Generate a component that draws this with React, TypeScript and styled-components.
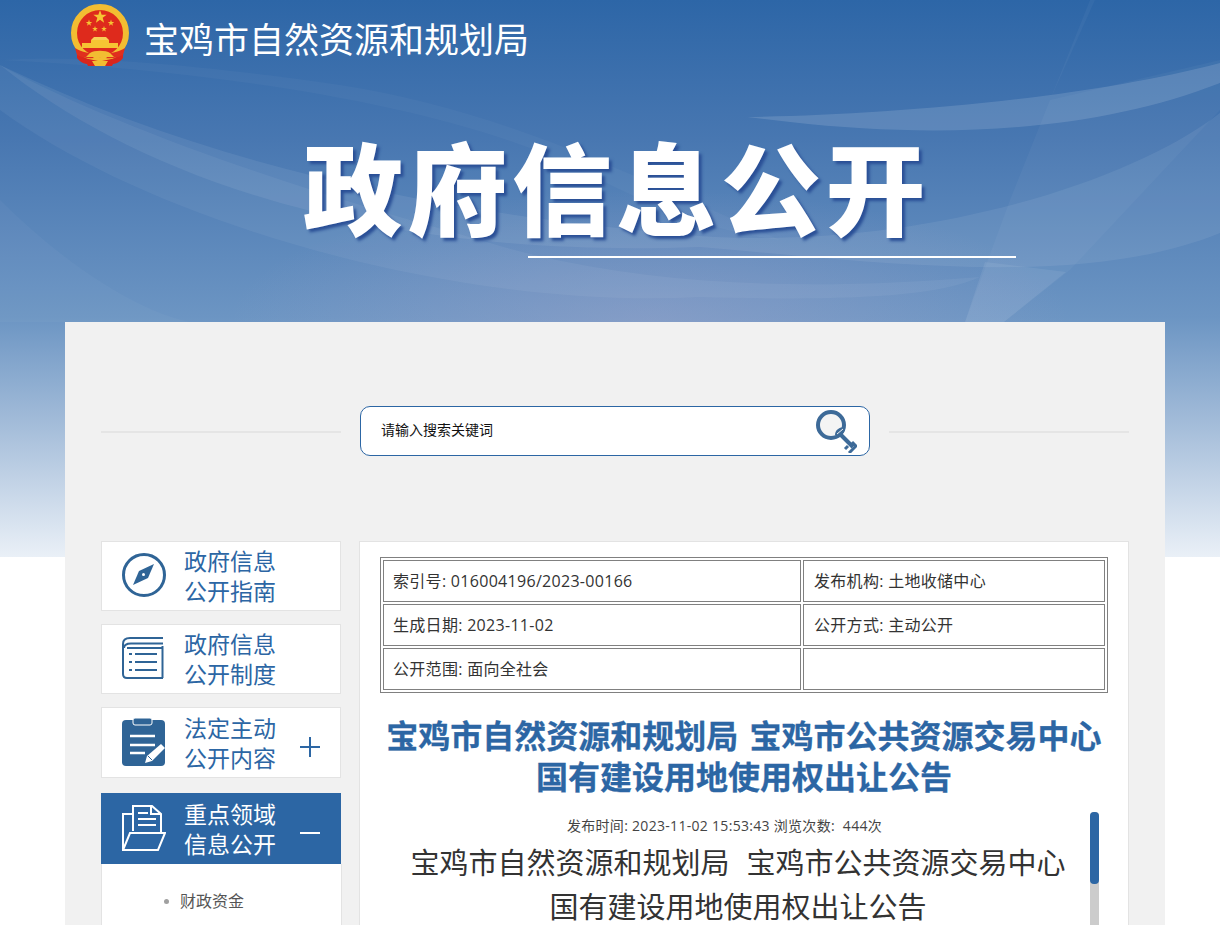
import { FC, ReactNode } from "react";
import styled, { createGlobalStyle } from "styled-components";

const BLUE = "#2c66a4";

const GlobalStyle = createGlobalStyle`
	html, body {
		margin: 0;
		padding: 0;
	}
	body {
		background: #fff;
		font-family: "Noto Sans CJK SC", "Liberation Sans", sans-serif;
	}
`;

const Page = styled.div`
	position: relative;
	height: 925px;
	overflow: hidden;
	background: linear-gradient(
			180deg,
			#2d66a7 0%,
			#4877b1 25%,
			#6c95c3 57%,
			#a3bcd9 76%,
			#eaf0f7 100%
		)
		top / 100% 557px no-repeat #fff;
`;

const Waves = styled.svg`
	position: absolute;
	top: 0;
	left: 0;
`;

const Hero = styled.header`
	position: relative;
	height: 322px;
`;

const Brand = styled.div`
	display: flex;
	align-items: flex-start;
	gap: 14px;
	padding: 4px 0 0 70px;
	height: 68px;
`;

const BrandName = styled.div`
	margin-top: 8px;
	font-size: 35px;
	line-height: 52px;
	color: #fff;
	white-space: nowrap;
`;

const HeroTitle = styled.h1`
	margin: 53px 0 0 303px;
	font-size: 100px;
	line-height: 120px;
	font-weight: 900;
	letter-spacing: 4.5px;
	color: #fff;
	white-space: nowrap;
	text-shadow: 3px 3px 3px #2a4f96;
`;

const HeroRule = styled.div`
	margin: 11px 0 0 528px;
	width: 488px;
	height: 2px;
	background: #fff;
`;

const Panel = styled.main`
	position: relative;
	margin: 0 55px 0 65px;
	padding: 84px 36px 0;
	height: 603px;
	box-sizing: border-box;
	background: #f1f1f1;
`;

const SearchRow = styled.div`
	display: flex;
	align-items: center;
	gap: 19px;
`;

const SearchLine = styled.div`
	flex: 1;
	height: 2px;
	margin-top: 2px;
	background: #e5e5e5;
`;

const SearchBox = styled.div`
	display: flex;
	align-items: center;
	justify-content: space-between;
	box-sizing: border-box;
	width: 510px;
	height: 50px;
	padding: 0 12px 0 20px;
	border: 1px solid ${BLUE};
	border-radius: 10px;
	background: #fff;
`;

const SearchHint = styled.span`
	margin-bottom: 4px;
	font-size: 14px;
	color: #111;
`;

const Columns = styled.div`
	display: flex;
	align-items: flex-start;
	gap: 18px;
	margin-top: 85px;
`;

const Sidebar = styled.nav`
	flex: none;
	width: 240px;
`;

const NavItem = styled.div<{ $active?: boolean; $tall?: boolean }>`
	display: flex;
	align-items: center;
	box-sizing: border-box;
	height: ${(p) => (p.$tall ? 71 : 70)}px;
	margin-bottom: ${(p) => (p.$active ? 0 : p.$tall ? 15 : 13)}px;
	padding: 0 0 2px 20px;
	border: 1px solid ${(p) => (p.$active ? BLUE : "#e3e3e3")};
	background: ${(p) => (p.$active ? BLUE : "#fff")};
	color: ${(p) => (p.$active ? "#fff" : BLUE)};
`;

const NavIcon = styled.div`
	flex: none;
	width: 44px;
	display: flex;
	align-items: center;
	justify-content: flex-start;
	margin-right: 18px;
`;

const NavLabel = styled.div`
	width: 95px;
	font-size: 23px;
	line-height: 30px;
	white-space: nowrap;
`;

const Toggle = styled.svg`
	flex: none;
	margin: 10px 0 0 21px;
`;

const SubMenu = styled.ul`
	box-sizing: border-box;
	width: 241px;
	height: 200px;
	margin: 0;
	padding: 24px 0 0 78px;
	border: 1px solid #e3e3e3;
	border-top: none;
	background: #fff;
	list-style: none;
`;

const SubItem = styled.li`
	position: relative;
	font-size: 16px;
	line-height: 24px;
	color: #555;
	&::before {
		content: "";
		position: absolute;
		left: -16px;
		top: 11px;
		width: 5px;
		height: 5px;
		border-radius: 50%;
		background: #a0a0a0;
	}
`;

const Article = styled.article`
	position: relative;
	flex: none;
	box-sizing: border-box;
	width: 770px;
	height: 400px;
	padding: 15px 20px 0;
	border: 1px solid #e3e3e3;
	background: #fff;
`;

const MetaTable = styled.table`
	width: 728px;
	table-layout: fixed;
	border: 1px solid #808080;
	border-spacing: 2px;
`;

const MetaCell = styled.td<{ $wide?: boolean }>`
	box-sizing: border-box;
	width: ${(p) => (p.$wide ? 418 : 302)}px;
	height: 42px;
	padding: 0 0 2px ${(p) => (p.$wide ? 9 : 10)}px;
	border: 1px solid #808080;
	font-family: "Open Sans", "Noto Sans CJK SC", sans-serif;
	font-size: 16px;
	letter-spacing: 0.3px;
	color: #333;
`;

const Headline = styled.h2`
	margin: 21px 0 0;
	font-size: 32px;
	line-height: 41px;
	font-weight: 700;
	word-spacing: 4px;
	-webkit-text-stroke: 0.3px ${BLUE};
	color: ${BLUE};
	text-align: center;
`;

const Published = styled.div`
	margin: 20px 0 0 -39px;
	font-family: "Open Sans", "Noto Sans CJK SC", sans-serif;
	font-size: 14px;
	line-height: 20px;
	letter-spacing: 0.3px;
	color: #444;
	text-align: center;
`;

const BodyTitle = styled.p`
	margin: 3px 0 0 -12px;
	font-size: 29px;
	line-height: 44px;
	word-spacing: 2px;
	color: #333;
	text-align: center;
	white-space: pre-wrap;
`;

const ScrollTrack = styled.div`
	position: absolute;
	top: 270px;
	left: 730px;
	width: 9px;
	height: 130px;
	border-radius: 4px;
	background: #ccc;
`;

const ScrollThumb = styled.div`
	height: 72px;
	border-radius: 4px;
	background: ${BLUE};
`;

const star = (cx: number, cy: number, r: number) => {
	const points: string[] = [];
	for (let i = 0; i < 10; i++) {
		const radius = i % 2 === 0 ? r : r * 0.4;
		const angle = (Math.PI / 5) * i - Math.PI / 2;
		points.push(`${cx + radius * Math.cos(angle)},${cy + radius * Math.sin(angle)}`);
	}
	return points.join(" ");
};

const Emblem = () => (
	<svg width="60" height="64" viewBox="0 0 60 64">
		<path d="M7 47 C12 50 17 52 22 52 L22 60 C15 61 10 58 7 54 Z" fill="#d9261c" />
		<path d="M53 47 C48 50 43 52 38 52 L38 60 C45 61 50 58 53 54 Z" fill="#d9261c" />
		<circle cx="30" cy="29" r="26" fill="#de2a1c" stroke="#f2bd32" strokeWidth="6" />
		<polygon points={star(30, 13, 7)} fill="#f6c433" />
		<polygon points={star(19, 19, 3.4)} fill="#f6c433" />
		<polygon points={star(41, 19, 3.4)} fill="#f6c433" />
		<polygon points={star(25, 25, 3)} fill="#f6c433" />
		<polygon points={star(34, 25, 3)} fill="#f6c433" />
		<path d="M24 33 H36 L39 36 H21 Z" fill="#f8cf56" />
		<rect x="21" y="36" width="18" height="3" fill="#f6c433" />
		<rect x="12" y="39" width="36" height="5" fill="#f6c433" />
		<path d="M5 44 C12 48 20 50 30 50 C40 50 48 48 55 44 L53 51 C45 55 38 55 30 53 C22 55 15 55 7 51 Z" fill="#e02f1e" />
		<path d="M20 49 C24 46 36 46 40 49 L44 53 L37 53 L34 57 L30 53 L26 57 L23 53 L16 53 Z" fill="#f2bd32" />
		<path d="M14 54 L28 57 L27 62 H18 Z" fill="#d9261c" />
		<path d="M46 54 L32 57 L33 62 H42 Z" fill="#d9261c" />
		<path d="M22 57 H38 L35 62 H25 Z" fill="#f2bd32" />
	</svg>
);

const KeyIcon = () => (
	<svg width="42" height="44" viewBox="0 0 42 44">
		<circle cx="16" cy="16" r="13" fill="#f4f4f4" stroke="#3d6a98" strokeWidth="4" />
		<path d="M24 24 L38 38" stroke="#3d6a98" strokeWidth="4" />
		<path d="M33 37 L30 40 M37 41 L34 44 M37 33 L41 37 L37 41" stroke="#3d6a98" strokeWidth="3" fill="none" />
		<path d="M20 26 C20 21 24 18 30 18 C30 24 26 27 20 26 Z" fill="#3d6a98" />
		<path d="M22 25 L28 20" stroke="#f4f4f4" strokeWidth="1" />
	</svg>
);

const CompassIcon = () => (
	<svg width="44" height="50" viewBox="0 -3 44 50">
		<circle cx="22" cy="22" r="20.5" fill="none" stroke="#2f6496" strokeWidth="3" />
		<path d="M32 11 L17 18 L11 32 L26 25 Z" fill="#2f6496" />
		<circle cx="21.5" cy="21.5" r="1.5" fill="#fff" />
	</svg>
);

const BookIcon = () => (
	<svg width="42" height="46" viewBox="0 -2 42 46" fill="none" stroke="#2f6496" strokeWidth="2">
		<path d="M41 1 H8 C3 1 1 3 1 7 V37 C1 40 2 41 5 41 H41" />
		<path d="M41 6.5 H9 C4 6.5 2 8 2 11" />
		<path d="M40.500 9 V41" />
		<path d="M5 11 H40" />
		<path d="M13 17 H35 M13 25 H35 M13 33 H35" />
		<path d="M7 17 H10 M7 25 H10 M7 33 H10" />
	</svg>
);

const ClipboardIcon = () => (
	<svg width="43" height="48" viewBox="0 0 43 48">
		<rect x="0" y="2" width="43" height="46" rx="4" fill="#2f6496" />
		<rect x="11" y="0" width="19" height="7" rx="2" fill="#2f6496" stroke="#fff" strokeWidth="1" />
		<path d="M8 18 H33 M8 27 H33 M8 35 H23" stroke="#fff" strokeWidth="2.500" />
		<path d="M23 45 L25 38 L39 26 L43 30 L30 43 Z" fill="#fff" />
		<path d="M26 38 L30 42" stroke="#2f6496" strokeWidth="1" />
	</svg>
);

const FolderIcon = () => (
	<svg width="44" height="46" viewBox="0 0 44 46" fill="none" stroke="#fff" strokeWidth="2">
		<path d="M1 45 V9 H11" />
		<path d="M11 26 V1 H30 L39 9 V27" />
		<path d="M29 1 V9 H39" />
		<path d="M16 8 H26 M16 14 H34 M16 20 H34" />
		<path d="M8 28 H43 L36 45 H1 Z" />
	</svg>
);

const Plus = () => (
	<Toggle width="20" height="24" viewBox="0 0 20 24">
		<path d="M0 12 H20 M10 2 V22" stroke={BLUE} strokeWidth="2" />
	</Toggle>
);

const Minus = () => (
	<Toggle width="20" height="24" viewBox="0 0 20 24">
		<path d="M0 12 H20" stroke="#fff" strokeWidth="2" />
	</Toggle>
);

type MenuEntry = {
	icon: ReactNode;
	lines: [string, string];
	tall?: boolean;
	active?: boolean;
	toggle?: ReactNode;
};

const menu: MenuEntry[] = [
	{ icon: <CompassIcon />, lines: ["政府信息", "公开指南"] },
	{ icon: <BookIcon />, lines: ["政府信息", "公开制度"] },
	{ icon: <ClipboardIcon />, lines: ["法定主动", "公开内容"], tall: true, toggle: <Plus /> },
	{ icon: <FolderIcon />, lines: ["重点领域", "信息公开"], tall: true, active: true, toggle: <Minus /> },
];

const HeroWaves: FC = () => (
	<Waves width="1220" height="557" viewBox="0 0 1220 557">
		<defs>
			<radialGradient id="glow" cx="0.5" cy="0.5" r="0.5">
				<stop offset="0" stopColor="#a8a8cc" stopOpacity="0.4" />
				<stop offset="1" stopColor="#a8a8cc" stopOpacity="0" />
			</radialGradient>
		</defs>
		<ellipse cx="650" cy="320" rx="420" ry="130" fill="url(#glow)" />
		<path d="M0 65 C130 170 360 260 700 247 C880 262 1080 290 1220 233 V113 C1120 190 900 250 700 236 C450 215 220 170 0 65 Z" fill="#fff" fillOpacity="0.07" />
		<path d="M0 110 C150 220 450 310 700 297 C820 300 930 300 980 277 C820 290 640 290 480 240 C300 190 120 130 0 65 Z" fill="#fff" fillOpacity="0.05" />
		<path d="M0 60 C200 70 420 100 560 160 C640 200 700 230 780 240 C620 170 500 110 340 85 C200 65 90 55 0 60 Z" fill="#fff" fillOpacity="0.03" />
		<path d="M747 117 C880 115 1080 100 1220 63 V83 C1100 130 950 140 790 122 Z" fill="#fff" fillOpacity="0.13" />
		<path d="M1090 0 L1050 100 L1010 200 L965 322 H1004 L1070 270 L1220 110 V60 L1050 100 L1095 0 Z" fill="#fff" fillOpacity="0.035" />
		<path d="M965 322 L985 262 L1066 272 L1004 322 Z" fill="#fff" fillOpacity="0.07" />
		<path d="M0 200 C80 280 180 340 240 322 L0 322 Z" fill="#fff" fillOpacity="0.03" />
	</Waves>
);

const App = () => (
	<Page>
		<GlobalStyle />
		<HeroWaves />
		<Hero>
			<Brand>
				<Emblem />
				<BrandName>宝鸡市自然资源和规划局</BrandName>
			</Brand>
			<HeroTitle>政府信息公开</HeroTitle>
			<HeroRule />
		</Hero>
		<Panel>
			<SearchRow>
				<SearchLine />
				<SearchBox>
					<SearchHint>请输入搜索关键词</SearchHint>
					<KeyIcon />
				</SearchBox>
				<SearchLine />
			</SearchRow>
			<Columns>
				<Sidebar>
					{menu.map((entry) => (
						<NavItem key={entry.lines[1]} $tall={entry.tall} $active={entry.active}>
							<NavIcon>{entry.icon}</NavIcon>
							<NavLabel>
								{entry.lines[0]}
								<br />
								{entry.lines[1]}
							</NavLabel>
							{entry.toggle}
						</NavItem>
					))}
					<SubMenu>
						<SubItem>财政资金</SubItem>
					</SubMenu>
				</Sidebar>
				<Article>
					<MetaTable>
						<tbody>
							<tr>
								<MetaCell $wide>索引号: 016004196/2023-00166</MetaCell>
								<MetaCell>发布机构: 土地收储中心</MetaCell>
							</tr>
							<tr>
								<MetaCell $wide>生成日期: 2023-11-02</MetaCell>
								<MetaCell>公开方式: 主动公开</MetaCell>
							</tr>
							<tr>
								<MetaCell $wide>公开范围: 面向全社会</MetaCell>
								<MetaCell />
							</tr>
						</tbody>
					</MetaTable>
					<Headline>
						宝鸡市自然资源和规划局 宝鸡市公共资源交易中心
						<br />
						国有建设用地使用权出让公告
					</Headline>
					<Published>发布时间: 2023-11-02 15:53:43 浏览次数:&nbsp;&nbsp;444次</Published>
					<BodyTitle>
						宝鸡市自然资源和规划局&nbsp;&nbsp;宝鸡市公共资源交易中心
						<br />
						国有建设用地使用权出让公告
					</BodyTitle>
					<ScrollTrack>
						<ScrollThumb />
					</ScrollTrack>
				</Article>
			</Columns>
		</Panel>
	</Page>
);

export default App;
